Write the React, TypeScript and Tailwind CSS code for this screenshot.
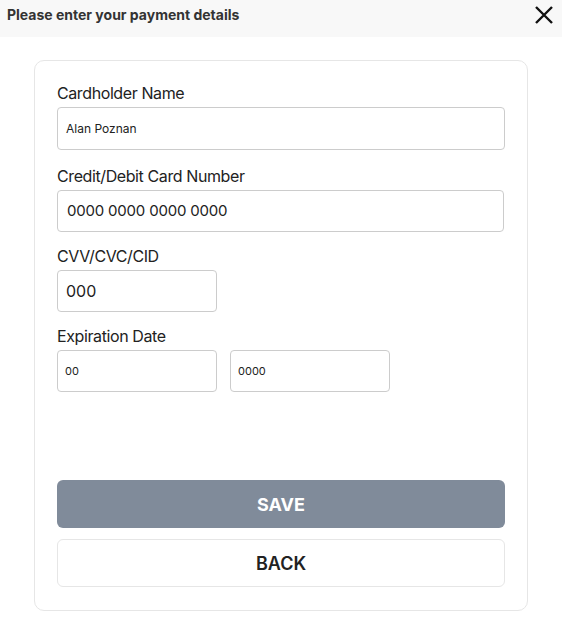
import React from 'react';

const font = { fontFamily: 'Inter, "Liberation Sans", sans-serif' };

const App: React.FC = () => {
  return (
    <div className="min-h-screen w-[562px] bg-white text-[#222]" style={font}>
      {/* Header */}
      <div className="flex h-[37px] items-center justify-between bg-[#f8f8f8] pl-[7px] pr-[8px]">
        <span className="text-[14px] font-bold text-[#333] -mt-[9px] tracking-[0px]">Please enter your payment details</span>
        <svg className="-mt-[8px]" width="20" height="20" viewBox="0 0 20 20" fill="none" stroke="#111" strokeWidth="2.4">
          <path d="M2 2 L18 18 M18 2 L2 18" />
        </svg>
      </div>

      {/* Card */}
      <div className="mx-[34px] mt-[23px] rounded-[10px] border border-[#e6e6e6] px-[22px] pt-[20px] pb-[23px]">
        <label className="block text-[16px] leading-[24px] tracking-[-0.4px] text-[#222]">Cardholder Name</label>
        <div className="mt-[2px] flex h-[43px] items-center rounded-[4px] border border-[#cccccc] px-[8px] text-[12px]">
          Alan Poznan
        </div>

        <label className="mt-[14px] block text-[16px] leading-[24px] tracking-[-0.4px]">Credit/Debit Card Number</label>
        <div className="mt-[2px] flex h-[42px] w-[447px] items-center rounded-[4px] border border-[#cccccc] px-[9px] text-[15px] tracking-[-0.2px]">
          0000 0000 0000 0000
        </div>

        <label className="mt-[12px] block text-[16px] leading-[24px] tracking-[-0.4px]">CVV/CVC/CID</label>
        <div className="mt-[2px] flex h-[42px] w-[160px] items-center rounded-[4px] border border-[#cccccc] px-[8px] text-[16px]">
          000
        </div>

        <label className="mt-[12px] block text-[16px] leading-[24px] tracking-[-0.4px]">Expiration Date</label>
        <div className="mt-[2px] flex gap-[13px]">
          <div className="flex h-[42px] w-[160px] items-center rounded-[4px] border border-[#cccccc] px-[7px] text-[11px]">00</div>
          <div className="flex h-[42px] w-[160px] items-center rounded-[4px] border border-[#cccccc] px-[7px] text-[11px]">0000</div>
        </div>

        <button className="mt-[88px] flex h-[48px] w-full items-center justify-center rounded-[6px] bg-[#808b9a] text-[18px] font-bold text-white">
          SAVE
        </button>
        <button className="mt-[11px] flex h-[48px] w-full items-center justify-center rounded-[6px] border border-[#e6e6e6] bg-white text-[18px] font-semibold text-[#222]">
          BACK
        </button>
      </div>
    </div>
  );
};

export default App;
